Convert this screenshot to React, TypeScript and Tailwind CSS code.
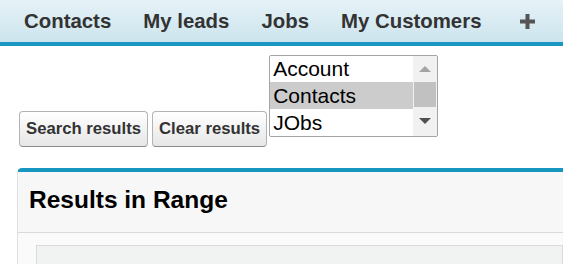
import React from "react";

const tabs = ["Contacts", "My leads", "Jobs", "My Customers"];
const options = ["Account", "Contacts", "JObs"];

const TabBar = () => (
    <div className="flex h-[46px] items-center border-b-4 border-[#1a97c3] bg-gradient-to-b from-[#e6f2f8] to-[#cce4ed] pl-[8px]">
        {tabs.map((t) => (
            <div key={t} className="px-[16px] text-[20.4px] font-bold text-[#333]">
                {t}
            </div>
        ))}
        <div className="ml-[22px] flex h-[15px] w-[15px] items-center justify-center">
            <svg width="15" height="15" viewBox="0 0 15 15">
                <rect x="5.5" y="0" width="4" height="15" fill="#555" />
                <rect x="0" y="5.5" width="15" height="4" fill="#555" />
            </svg>
        </div>
    </div>
);

const Button = ({ label }: { label: string }) => (
    <button className="h-[36px] rounded-[4px] border border-[#b3b3b3] border-b-[#8c8c8c] bg-gradient-to-b from-[#ffffff] to-[#e6e6e6] px-[6px] text-[16.7px] font-bold text-[#333]">
        {label}
    </button>
);

const ListBox = () => (
    <div className="flex h-[82px] w-[169px] overflow-hidden rounded-[2px] border border-[#a5a5a5] bg-white">
        <div className="flex flex-1 flex-col">
            {options.map((o, i) => (
                <div
                    key={o}
                    className={`pl-[3px] text-[21px] text-black ${i === 0 ? "h-[26px] leading-[26px]" : "h-[27px] leading-[27px]"} ${i === 1 ? "bg-[#cccccc]" : ""}`}
                >
                    {o}
                </div>
            ))}
        </div>
        {/* scrollbar */}
        <div className="flex w-[24px] flex-col items-center bg-[#f1f1f1]">
            <div className="flex h-[26px] items-center justify-center">
                <svg width="12" height="6" viewBox="0 0 12 6">
                    <polygon points="0,6 12,6 6,0" fill="#a3a3a3" />
                </svg>
            </div>
            <div className="h-[25px] w-[22px] bg-[#c1c1c1]" />
            <div className="flex flex-1 items-center justify-center pb-[2px]">
                <svg width="12" height="6" viewBox="0 0 12 6">
                    <polygon points="0,0 12,0 6,6" fill="#505050" />
                </svg>
            </div>
        </div>
    </div>
);

export default function App() {
    return (
        <div className="h-[264px] w-[563px] overflow-hidden bg-white font-['Liberation_Sans',Arial,sans-serif]">
            <TabBar />

            {/* Search controls */}
            <div className="flex items-start pl-[19px] pt-[9px]">
                <div className="mt-[56px] flex gap-[4px]">
                    <Button label="Search results" />
                    <Button label="Clear results" />
                </div>
                <div className="ml-[2px]">
                    <ListBox />
                </div>
            </div>

            {/* Results panel */}
            <div className="ml-[17px] mt-[21px] rounded-tl-[5px] border-l border-t-4 border-[#e0e0e0] border-t-[#1797c0] bg-[#fafafa]">
                <div className="flex h-[61px] items-center border-b border-[#d9d9d9] bg-[#f7f7f7] pb-[3px] pl-[11px]">
                    <h2 className="text-[24.5px] font-bold text-black">Results in Range</h2>
                </div>
                <div className="pl-[18px] pt-[12px]">
                    <div className="h-[40px] border border-[#dadada] bg-[#f1f2f2]" />
                </div>
            </div>
        </div>
    );
}
